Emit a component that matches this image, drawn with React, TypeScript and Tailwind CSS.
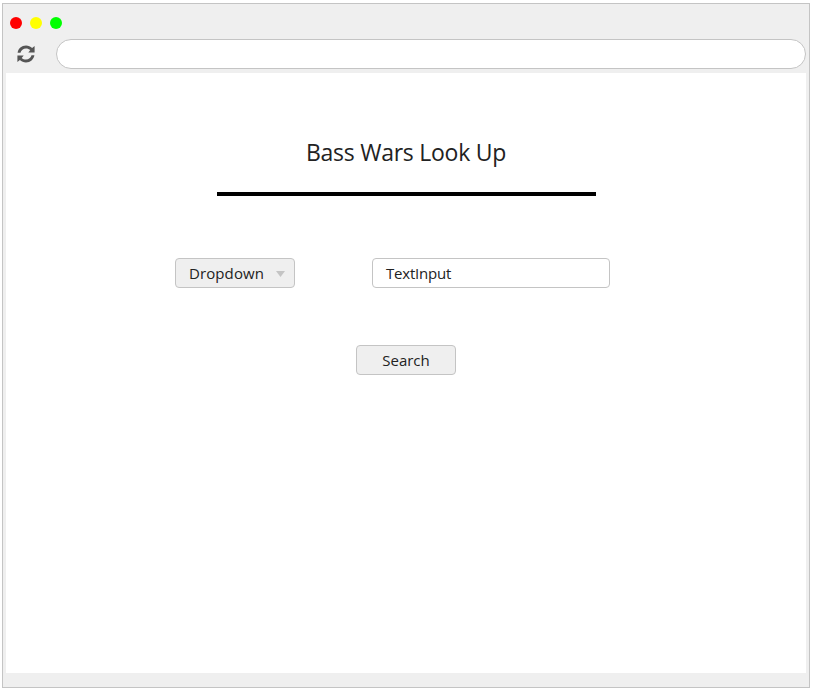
export default function App() {
  return (
    <div className="h-[690px] w-[813px] overflow-hidden bg-white pl-[2px] pt-[3px] font-['Open_Sans','Noto_Sans',sans-serif] text-[#222]">
      <div className="flex h-[685px] w-[808px] flex-col border border-[#c4c4c4] bg-[#efefef] px-[3px]">
        <div className="flex gap-2 pl-1 pt-[13px]">
          <span className="size-3 rounded-full bg-[#ff0000]" />
          <span className="size-3 rounded-full bg-[#ffff00]" />
          <span className="size-3 rounded-full bg-[#00ff00]" />
        </div>
        <div className="mt-[10px] flex h-[30px] items-center">
          <svg className="ml-[11px] size-[18px] shrink-0" viewBox="0 0 18 18" fill="#555">
            <path d="M.6 7.7C1.2 3.6 4.7.5 9 .5c2.4 0 4.5.9 6.1 2.4L17.6.9v6.5h-6.3l2-2.3C12.1 4 10.6 3.4 9 3.4c-2.7 0-4.9 1.8-5.5 4.3z" />
            <path d="M17.4 10.3c-.6 4.1-4.1 7.2-8.4 7.2-2.4 0-4.5-.9-6.1-2.4L.4 17.1v-6.5h6.3l-2 2.3c1.2 1.1 2.7 1.7 4.3 1.7 2.7 0 4.9-1.8 5.5-4.3z" />
          </svg>
          <div className="ml-[21px] h-[30px] w-[750px] rounded-full border border-[#c4c4c4] bg-white" />
        </div>
        <main className="mt-1 flex h-[600px] w-[800px] flex-col items-center bg-white">
          <h1 className="mt-[63px] h-[33px] whitespace-nowrap text-[23px] leading-8 tracking-[-0.25px]">Bass Wars Look Up</h1>
          <div className="mt-[23px] h-1 w-[379px] bg-black" />
          <div className="mt-[62px] flex w-full pl-[169px]">
            <div className="flex h-[30px] w-[120px] items-center justify-between rounded-[4px] border border-[#c4c4c4] bg-[#efefef] pl-[13px] pr-[9px] text-[15px] tracking-[0.1px]">
              <span>Dropdown</span>
              <svg className="mt-px h-[6px] w-[9px]" viewBox="0 0 9 6" fill="#c4c4c4"><path d="M0 0h9L4.5 6z" /></svg>
            </div>
            <div className="ml-[77px] flex h-[30px] w-[238px] items-center rounded-[4px] border border-[#c4c4c4] bg-white pl-[13px] text-[15px] tracking-[-0.2px]">TextInput</div>
          </div>
          <div className="mt-[57px] flex h-[30px] w-[100px] items-center justify-center rounded-[4px] border border-[#c4c4c4] bg-[#efefef] text-[15px]">Search</div>
        </main>
      </div>
    </div>
  );
}
